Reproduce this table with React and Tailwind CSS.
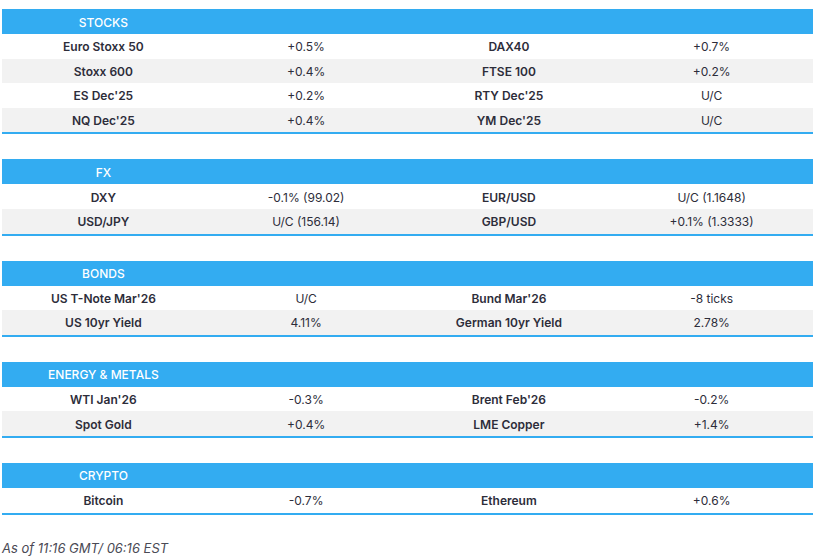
import React from "react";

const sections = [
  {
    title: "STOCKS",
    rows: [
      ["Euro Stoxx 50", "+0.5%", "DAX40", "+0.7%"],
      ["Stoxx 600", "+0.4%", "FTSE 100", "+0.2%"],
      ["ES Dec'25", "+0.2%", "RTY Dec'25", "U/C"],
      ["NQ Dec'25", "+0.4%", "YM Dec'25", "U/C"],
    ],
  },
  {
    title: "FX",
    rows: [
      ["DXY", "-0.1% (99.02)", "EUR/USD", "U/C (1.1648)"],
      ["USD/JPY", "U/C (156.14)", "GBP/USD", "+0.1% (1.3333)"],
    ],
  },
  {
    title: "BONDS",
    rows: [
      ["US T-Note Mar'26", "U/C", "Bund Mar'26", "-8 ticks"],
      ["US 10yr Yield", "4.11%", "German 10yr Yield", "2.78%"],
    ],
  },
  {
    title: "ENERGY & METALS",
    rows: [
      ["WTI Jan'26", "-0.3%", "Brent Feb'26", "-0.2%"],
      ["Spot Gold", "+0.4%", "LME Copper", "+1.4%"],
    ],
  },
  {
    title: "CRYPTO",
    rows: [["Bitcoin", "-0.7%", "Ethereum", "+0.6%"]],
  },
];

export default function App() {
  return (
    <div
      className="w-[818px] h-[560px] bg-white pt-[9px] pl-[2px] pr-[5px] text-[#2d2d3a]"
      style={{ fontFamily: "Inter, 'Liberation Sans', sans-serif" }}
    >
      <div className="flex flex-col gap-[25px]">
        {sections.map((s) => (
          <div key={s.title} className="border-b-2 border-[#33acf1]">
            <div className="grid grid-cols-4 h-[25px] bg-[#33acf1] items-center pt-[2px]">
              <div className="text-center text-white text-[12px] font-medium leading-none">
                {s.title}
              </div>
            </div>
            {s.rows.map((r, i) => (
              <div
                key={i}
                className={`grid grid-cols-4 h-[24.6px] items-center pt-[2px] text-[12px] leading-none ${
                  i % 2 === 1 ? "bg-[#f2f2f2]" : "bg-white"
                }`}
              >
                <div className="text-center font-semibold">{r[0]}</div>
                <div className="text-center">{r[1]}</div>
                <div className="text-center font-semibold">{r[2]}</div>
                <div className="text-center">{r[3]}</div>
              </div>
            ))}
          </div>
        ))}
      </div>
      <div className="mt-[24px] italic text-[13px] text-[#4a4a55]">
        As of 11:16 GMT/ 06:16 EST
      </div>
    </div>
  );
}
